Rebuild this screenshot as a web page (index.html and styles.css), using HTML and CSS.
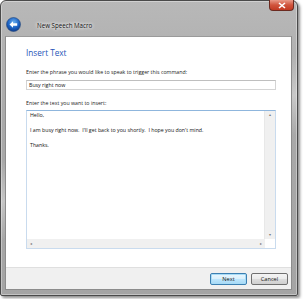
FILE: index.html
```html
<!DOCTYPE html>
<html>
<head>
<meta charset="utf-8">
<link rel="stylesheet" href="styles.css">
</head>
<body>
<div class="window">
  <div class="titlebar">
    <div class="back">
      <svg width="15" height="15" viewBox="0 0 15 15">
        <defs>
          <radialGradient id="bg" cx="50%" cy="35%" r="65%">
            <stop offset="0" stop-color="#6fb3f0"/>
            <stop offset="0.6" stop-color="#1c63c4"/>
            <stop offset="1" stop-color="#0d3c8c"/>
          </radialGradient>
        </defs>
        <circle cx="7.5" cy="7.5" r="7" fill="url(#bg)" stroke="#2a4a7a" stroke-width="0.6"/>
        <path d="M3.5 7.5 L7 4.2 L7 6.3 L11.2 6.3 L11.2 8.7 L7 8.7 L7 10.8 Z" fill="#fff"/>
      </svg>
    </div>
    <div class="title">New Speech Macro</div>
    <div class="close">
      <svg width="8" height="7" viewBox="0 0 8 7"><path d="M1 1 L7 6 M7 1 L1 6" stroke="#fff" stroke-width="1.6"/></svg>
    </div>
  </div>
  <div class="client">
    <div class="content">
      <div class="heading">Insert Text</div>
      <div class="label first">Enter the phrase you would like to speak to trigger this command:</div>
      <div class="input">Busy right now</div>
      <div class="label second">Enter the text you want to insert:</div>
      <div class="textarea">
        <div class="text-main">
          <div class="text">
            <p>Hello,</p>
            <p>I am busy right now.&nbsp; I'll get back to you shortly.&nbsp; I hope you don't mind.</p>
            <p>Thanks.</p>
          </div>
          <div class="vscroll">
            <span class="arrow">&#9652;</span>
            <span class="arrow">&#9662;</span>
          </div>
        </div>
        <div class="hscroll">
          <span class="arrow">&#9666;</span>
          <span class="arrow">&#9656;</span>
        </div>
      </div>
    </div>
    <div class="footer">
      <button class="btn default">Next</button>
      <button class="btn">Cancel</button>
    </div>
  </div>
</div>
</body>
</html>
```
FILE: styles.css
```css
html, body {
  margin: 0;
  padding: 0;
  background: #ffffff;
}
body {
  font-family: "Liberation Sans", Arial, sans-serif;
  width: 303px;
  height: 299px;
  overflow: hidden;
}
.window {
  box-sizing: border-box;
  width: 298px;
  height: 296px;
  border: 1px solid #4a4a4a;
  border-radius: 6px 6px 2px 2px;
  background:
    linear-gradient(160deg, rgba(255,255,255,0) 40%, rgba(255,255,255,0.35) 50%, rgba(255,255,255,0) 60%),
    linear-gradient(180deg, #b8b8b8 0%, #a9a9a9 40%, #a4a4a4 100%);
  box-shadow: 2px 2px 3px rgba(0,0,0,0.45), inset 0 0 0 1px rgba(255,255,255,0.35);
  display: flex;
  flex-direction: column;
  padding: 0 5px 5px 4px;
}
.titlebar {
  box-sizing: border-box;
  height: 35px;
  padding-top: 13px;
  display: flex;
  align-items: flex-start;
  position: relative;
}
.back {
  width: 15px;
  height: 15px;
  margin-left: 1px;
  margin-top: 3px;
}
.title {
  margin-left: 16px;
  margin-top: 7px;
  font-family: "Open Sans", "Liberation Sans", sans-serif;
  font-size: 6.2px;
  line-height: 9px;
  color: #111;
  text-shadow: 0 0 3px #fff, 0 0 4px #fff;
}
.close {
  position: absolute;
  top: -1px;
  right: -2px;
  width: 25px;
  height: 11px;
  border: 1px solid #6b2a20;
  border-top: none;
  border-radius: 0 0 4px 4px;
  background: linear-gradient(180deg, #e99a88 0%, #d0543c 50%, #c23a22 100%);
  display: flex;
  align-items: center;
  justify-content: center;
  box-sizing: border-box;
}
.client {
  flex: 1;
  display: flex;
  flex-direction: column;
  background: #fff;
  border: 1px solid #8c8c8c;
  border-top-color: #9a9a9a;
}
.content {
  flex: 1;
  padding: 10px 15px 0 20px;
  display: flex;
  flex-direction: column;
}
.heading {
  font-family: "Open Sans", "Liberation Sans", sans-serif;
  font-size: 8.2px;
  color: #1f55b8;
  line-height: 11px;
}
.label {
  font-family: "Open Sans", "Liberation Sans", sans-serif;
  font-size: 5.25px;
  color: #222;
  line-height: 8px;
}
.label.first {
  margin-top: 10px;
}
.label.second {
  margin-top: 9px;
}
.input {
  margin-top: 4px;
  height: 10px;
  box-sizing: border-box;
  border: 1px solid #d4d4d4;
  border-top-color: #bfbfbf;
  font-family: "Open Sans", "Liberation Sans", sans-serif;
  font-size: 5.25px;
  line-height: 8px;
  padding-left: 2px;
  color: #111;
}
.textarea {
  margin-top: 3px;
  height: 139px;
  box-sizing: border-box;
  border: 1px solid #c9dbee;
  border-top-color: #8fb6dd;
  display: flex;
  flex-direction: column;
}
.text-main {
  flex: 1;
  display: flex;
}
.text {
  flex: 1;
  padding: 1px 3px;
  font-family: "Open Sans", "Liberation Sans", sans-serif;
  font-size: 5.25px;
  line-height: 7.5px;
  color: #111;
}
.text p {
  margin: 0 0 7.5px 0;
}
.vscroll {
  width: 10px;
  background: #f0f0f0;
  border-left: 1px solid #e8e8e8;
  display: flex;
  flex-direction: column;
  justify-content: space-between;
  align-items: center;
}
.hscroll {
  height: 9px;
  background: #f0f0f0;
  margin-right: 10px;
  display: flex;
  justify-content: space-between;
  align-items: center;
  padding: 0 3px;
}
.arrow {
  font-size: 4px;
  color: #777;
  line-height: 8px;
}
.footer {
  height: 21px;
  background: #f0f0f0;
  border-top: 1px solid #dfdfdf;
  display: flex;
  justify-content: flex-end;
  align-items: center;
  gap: 4px;
  padding-right: 3px;
}
.btn {
  width: 37px;
  height: 12px;
  padding: 0;
  box-sizing: border-box;
  border: 1px solid #707070;
  border-radius: 2px;
  background: linear-gradient(180deg, #f4f4f4 0%, #ebebeb 50%, #dddddd 51%, #cfcfcf 100%);
  font-family: "Open Sans", "Liberation Sans", sans-serif;
  font-size: 5.6px;
  color: #111;
  line-height: 10px;
}
.btn.default {
  border-color: #3c7fb1;
  box-shadow: inset 0 0 0 1px #a8dcf7;
  background: linear-gradient(180deg, #eaf6fd 0%, #d9f0fc 50%, #bee6fd 51%, #a7d9f5 100%);
}
```
